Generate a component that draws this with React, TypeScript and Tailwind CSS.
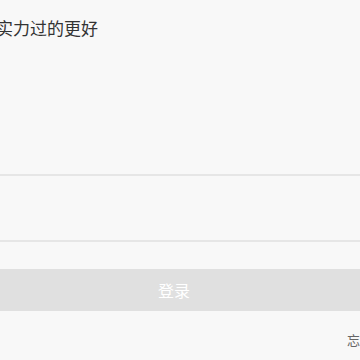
export default function App() {
  return (
    <div
      className="w-[360px] h-[360px] overflow-hidden bg-[#f8f8f8]"
      style={{ fontFamily: '"Noto Sans CJK SC", "Noto Sans", sans-serif' }}
    >
      {/* slogan */}
      <div className="pt-4 -ml-[4px] text-[17px] leading-[24px] text-[#333333] whitespace-nowrap">
        实力过的更好
      </div>

      {/* account / password inputs */}
      <div className="h-[136px] border-b-2 border-[#e6e6e6]" />
      <div className="h-[66px] border-b-2 border-[#e6e6e6]" />

      {/* login button */}
      <div className="mt-[27px] -ml-3 w-[372px] h-[42px] bg-[#e0e0e0] flex items-center justify-center text-[16px] text-white">
        登录
      </div>

      <div className="mt-[19px] flex justify-end">
        <span className="text-[13px] leading-[20px] text-[#666666] whitespace-nowrap">忘</span>
      </div>
    </div>
  )
}
